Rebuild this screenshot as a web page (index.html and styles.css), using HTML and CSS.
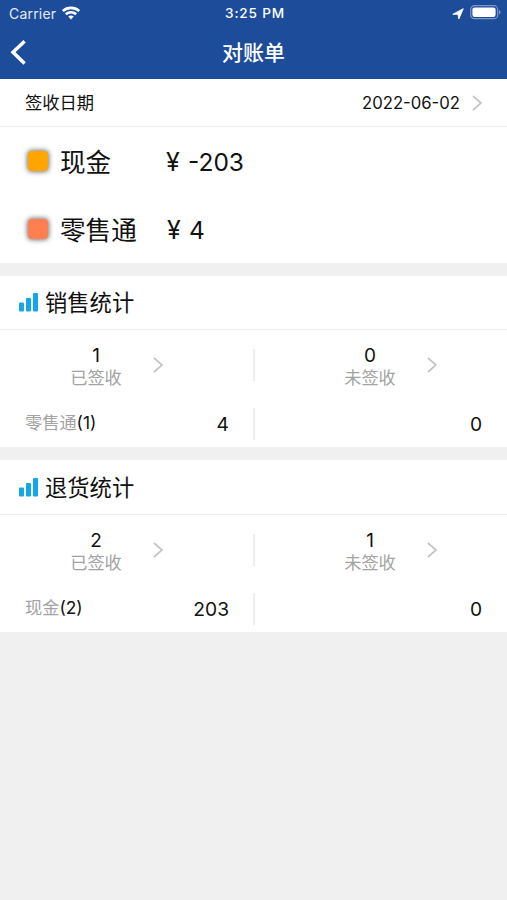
FILE: index.html
```html
<!DOCTYPE html>
<html lang="zh-CN">
<head>
<meta charset="utf-8">
<title>对账单</title>
<link rel="stylesheet" href="styles.css">
</head>
<body>
<header class="header">
  <div class="status">
    <div class="carrier"><span>Carrier</span>
      <svg class="wifi" width="18" height="14" viewBox="0 0 18 14"><g fill="none" stroke="#fff" stroke-width="2.6"><path d="M.8 5.1C5.3.8 12.7.8 17.2 5.1"/><path d="M3.8 8.3C6.8 5.5 11.2 5.5 14.2 8.3"/></g><path fill="#fff" d="M6.2 10.6C7.8 9.2 10.2 9.2 11.8 10.6L9 13.6Z"/></svg>
    </div>
    <div class="time">3:25 PM</div>
    <div class="indicators">
      <svg width="12" height="12" viewBox="0 0 12 12"><path fill="#fff" stroke="#fff" stroke-width=".9" stroke-linejoin="round" d="M11.3.7 6.8 11 6 6.3.8 6.3Z"/></svg>
      <svg class="battery" width="31" height="15" viewBox="0 0 31 15"><rect x=".7" y=".7" width="27" height="13" rx="3.8" fill="none" stroke="#7c97c9" stroke-width="1.2"/><rect x="2.4" y="2.4" width="23.2" height="9.6" rx="2.2" fill="#fff"/><path fill="#7c97c9" d="M29 5Q32 7.2 29 9.6Z"/></svg>
    </div>
  </div>
  <nav class="nav">
    <svg class="back" width="18" height="28" viewBox="0 0 18 28"><path d="M15.6 2.2 4 13.2 15.6 24.6" fill="none" stroke="#fff" stroke-width="3.5"/></svg>
    <h1>对账单</h1>
  </nav>
</header>
<main>
  <div class="date-row">
    <span>签收日期</span><span class="date">2022-06-02</span>
    <svg class="chevron" width="10" height="16" viewBox="0 0 10 16"><path d="M1 1 9 8 1 15"/></svg>
  </div>
  <section class="methods">
    <div class="method"><i class="swatch cash"></i><span class="name">现金</span><span class="yen">¥</span><span class="amount">-203</span></div>
    <div class="method retail"><i class="swatch"></i><span class="name">零售通</span><span class="yen">¥</span><span class="amount">4</span></div>
  </section>
  <section class="card">
    <h2><svg width="20" height="19" viewBox="0 0 20 19"><g fill="#12a7e8"><rect x="0" y="9.5" width="5" height="9" rx="1"/><rect x="7" y="5" width="5" height="13.5" rx="1"/><rect x="14" y="0" width="5" height="18.5" rx="1"/></g></svg>销售统计</h2>
    <div class="row counts">
      <div class="cell"><div class="count"><b>1</b><span>已签收</span></div><svg class="chevron" width="10" height="16" viewBox="0 0 10 16"><path d="M1 1 9 8 1 15"/></svg></div>
      <div class="cell"><div class="count"><b>0</b><span>未签收</span></div><svg class="chevron" width="10" height="16" viewBox="0 0 10 16"><path d="M1 1 9 8 1 15"/></svg></div>
    </div>
    <div class="row totals">
      <div class="cell"><span class="label">零售通<em>(1)</em></span><b>4</b></div>
      <div class="cell"><b>0</b></div>
    </div>
  </section>
  <section class="card">
    <h2><svg width="20" height="19" viewBox="0 0 20 19"><g fill="#12a7e8"><rect x="0" y="9.5" width="5" height="9" rx="1"/><rect x="7" y="5" width="5" height="13.5" rx="1"/><rect x="14" y="0" width="5" height="18.5" rx="1"/></g></svg>退货统计</h2>
    <div class="row counts">
      <div class="cell"><div class="count"><b>2</b><span>已签收</span></div><svg class="chevron" width="10" height="16" viewBox="0 0 10 16"><path d="M1 1 9 8 1 15"/></svg></div>
      <div class="cell"><div class="count"><b>1</b><span>未签收</span></div><svg class="chevron" width="10" height="16" viewBox="0 0 10 16"><path d="M1 1 9 8 1 15"/></svg></div>
    </div>
    <div class="row totals">
      <div class="cell"><span class="label">现金<em>(2)</em></span><b>203</b></div>
      <div class="cell"><b>0</b></div>
    </div>
  </section>
</main>
</body>
</html>
```
FILE: styles.css
```css
* { box-sizing: border-box; }
body {
  margin: 0;
  min-height: 100vh;
  background: #f0f0f0;
  color: #111;
  font-family: Inter, "Noto Sans CJK SC", sans-serif;
}
svg { display: block; flex: none; }
b { font-weight: 400; }
.header { height: 79px; background: #1d4c9b; color: #fff; }
.status {
  display: grid;
  grid-template-columns: 1fr auto 1fr;
  align-items: center;
  height: 27px;
  padding: 0 6px 0 9px;
  font-size: 14px;
  line-height: 27px;
}
.carrier { display: flex; align-items: center; gap: 6px; color: #e3eaf6; letter-spacing: .2px; }
.wifi, .battery { margin-top: -2px; }
.time { font-size: 13.6px; font-weight: 500; letter-spacing: .8px; }
.indicators { display: flex; justify-content: flex-end; align-items: center; gap: 6px; }
.nav {
  display: grid;
  grid-template-columns: 1fr auto 1fr;
  align-items: center;
  height: 50px;
  padding: 0 9px;
}
h1 { margin: 0; font-size: 21px; font-weight: 500; line-height: 50px; padding-top: 1px; }
.date-row {
  display: flex;
  align-items: center;
  height: 48px;
  padding: 0 25px;
  background: #fff;
  border-bottom: 1px solid #f3f3f3;
  font-size: 17.3px;
  line-height: 47px;
}
.date { margin-left: auto; margin-right: 12px; padding-top: 1px; font-size: 16.7px; }
.chevron { fill: none; stroke: #c4c4c6; stroke-width: 1.7; }
.methods { height: 136px; margin-bottom: 13px; background: #fff; }
.method {
  display: flex;
  align-items: center;
  height: 68px;
  padding: 0 28px;
  font-size: 25.6px;
  line-height: 68px;
}
.swatch { width: 20px; height: 20px; border-radius: 4px; background: #ff7f50; box-shadow: 0 0 5px 1px #777; }
.swatch.cash { background: #ffa500; }
.name { width: 106px; margin-left: 12px; padding-top: 3px; }
.yen { width: 22px; padding-top: 1px; font-size: 25px; }
.retail .name { width: 107px; }
.amount { padding-top: 1px; font-size: 24.5px; }
.card { height: 171px; margin-bottom: 13px; background: #fff; }
.card:last-child { height: 172px; }
.card:last-child h2 { height: 55px; line-height: 55px; }
h2 {
  display: flex;
  align-items: center;
  gap: 6px;
  height: 54px;
  margin: 0;
  padding-left: 19px;
  border-bottom: 1px solid #ededed;
  font-size: 22.3px;
  font-weight: 400;
  line-height: 53px;
}
.row { display: grid; grid-template-columns: 255px 1fr; align-items: center; }
.cell { display: flex; align-items: center; height: 32px; }
.cell:first-child { border-right: 2px solid #eee; }
.counts { height: 70px; }
.counts .cell { padding-left: 70px; gap: 31px; }
.counts .cell:last-child { padding-left: 89px; }
.count { display: grid; grid-template-rows: 22px 22px; justify-items: center; width: 52px; padding-top: 3px; }
.count b { font-size: 19px; line-height: 22px; }
.count span, .label { color: #a3a3a3; font-size: 17.2px; line-height: 22px; }
.totals { height: 47px; font-size: 19.2px; }
.totals .cell { padding: 0 24px 0 25px; }
.totals .label { padding-bottom: 2px; }
.totals .cell:last-child { padding-right: 25px; }
.totals .cell > b { margin-left: auto; }
.label em { color: #111; font-style: normal; font-size: 17.4px; }
```
